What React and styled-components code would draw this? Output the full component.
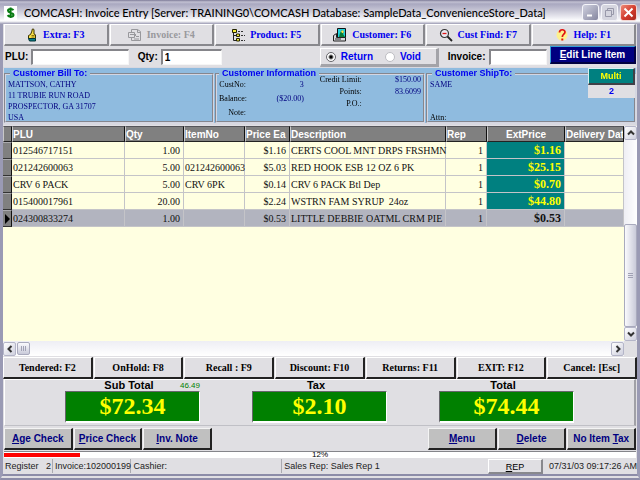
import React from "react";
import styled, { createGlobalStyle, css } from "styled-components";

const sans = '"Liberation Sans", Arial, sans-serif';
const serif = '"Liberation Serif", "Times New Roman", serif';
const face = "#e0dfe3";

const GlobalStyle = createGlobalStyle`
  * { box-sizing: border-box; }
  body { margin: 0; background: ${face}; font-family: ${sans}; }
  button, input { font: inherit; margin: 0; }
  button { padding: 0; }
`;

const Window = styled.div`
  min-height: 100vh;
  display: flex;
  flex-direction: column;
  background: ${face};
  border: solid #9a9ab4;
  border-width: 0 3px;
  border-bottom: 6px double #8c8ca8;
`;

/* Title bar */
const TitleBar = styled.header`
  height: 24px;
  margin: 0 -3px;
  padding: 1px 3px 0 4px;
  display: flex;
  align-items: center;
  gap: 7px;
  background: linear-gradient(#7d7b98 0, #c2c1d2 2px, #a9a8c0 4px, #c5c4d4 10px, #f4f4f8 19px, #ffffff 21px, #9a99b2 24px);
`;
const Title = styled.h1`
  flex: 1;
  margin: 0;
  font: 500 11px/16px Lato, ${sans};
  color: #000;
  white-space: nowrap;
`;
const WindowButtons = styled.div`
  display: flex;
  gap: 2px;
`;
const WindowButton = styled.button`
  width: 17px;
  height: 17px;
  display: grid;
  place-items: center;
  border: 1px solid ${(p) => (p.$close ? "#f4d8d4" : "#f5f5fa")};
  border-radius: 3px;
  background: ${(p) =>
    p.$close
      ? "linear-gradient(135deg, #ee8a78, #d23a2c 55%, #a82820)"
      : p.$muted
      ? "#d5d5df"
      : "linear-gradient(135deg, #d0d1df, #85869f)"};
`;

/* Toolbar */
const Toolbar = styled.nav`
  display: grid;
  grid-template-columns: repeat(6, 1fr);
  gap: 1px;
  padding: 0 1px;
`;
const ToolButton = styled.button`
  height: 22px;
  display: flex;
  align-items: center;
  justify-content: center;
  gap: 5px;
  background: ${face};
  border: solid;
  border-width: 1px 2px 2px 1px;
  border-color: #fff #88888d #88888d #fff;
  font: bold 10px/14px ${serif};
  color: #0000ee;
  &:disabled { color: #99999d; }
`;

/* Entry row */
const EntryRow = styled.form`
  height: 21px;
  display: grid;
  grid-template-columns: minmax(0, 1fr) minmax(0, 1fr);
`;
const EntryGroup = styled.div`
  display: flex;
  align-items: center;
  padding-left: ${(p) => (p.$right ? 0 : "2px")};
  padding-right: ${(p) => (p.$right ? "1px" : "98px")};
  gap: 3px;
`;
const FieldLabel = styled.label`
  font: bold 10px/16px ${sans};
  white-space: nowrap;
  margin-left: ${(p) => (p.$spaced ? "6px" : 0)};
`;
const TextBox = styled.input`
  flex: ${(p) => p.$grow} 1 0;
  min-width: 0;
  height: 16px;
  padding: 0 2px;
  border: solid;
  border-width: 2px 1px 1px 2px;
  border-color: #85858a #f6f6f6 #f6f6f6 #85858a;
  background: #fff;
  font: bold 10px/13px ${sans};
  border-radius: 0;
  outline: none;
`;
const RadioPanel = styled.div`
  flex: 116 1 0;
  height: 19px;
  display: flex;
  align-items: center;
  justify-content: center;
  gap: 12px;
  margin-top: 1px;
  padding: 2px 10px 0 0;
  border: solid;
  border-width: 1px 3px 3px 1px;
  border-color: #fff #a3a3a8 #a3a3a8 #fff;
`;
const RadioLabel = styled.label`
  display: flex;
  align-items: center;
  gap: 5px;
  font: bold 10px/12px ${sans};
  color: #0000f0;
`;
const Radio = styled.input`
  appearance: none;
  width: 10px;
  height: 10px;
  border-radius: 50%;
  border: 1px solid #77777c;
  border-color: ${(p) => (p.defaultChecked ? "#66666b" : "#bdbdc2")};
  background: #fff;
  &:checked { background: radial-gradient(circle, #000 0 1px, #fff 3px); }
`;
const EditButton = styled.button`
  flex: 92 1 0;
  height: 18px;
  align-self: flex-start;
  border: solid;
  border-width: 1px 2px 2px 1px;
  border-color: #35a0d8 #000040 #000040 #35a0d8;
  background: #000080;
  color: #fff;
  font: bold 10px/14px ${sans};
  white-space: nowrap;
`;

/* Customer strip */
const CustomerStrip = styled.section`
  display: grid;
  grid-template-columns: repeat(3, minmax(0, 1fr));
  gap: 1px;
  background: #8fbbdf;
  border: solid #d8d8e0;
  border-width: 1px 1px 2px;
`;
const Group = styled.fieldset`
  position: relative;
  min-width: 0;
  height: 55px;
  margin: 0;
  padding: 0 2px;
  border: 2px groove #d4d6e2;
`;
const Legend = styled.legend`
  margin-left: ${(p) => (p.$near ? 0 : "2px")};
  padding: 0 3px;
  font: bold 9px/11px ${sans};
  color: #0000f0;
  white-space: nowrap;
`;
const Address = styled.address`
  font: normal 8px/11px ${serif};
  color: #000080;
`;
const InfoColumns = styled.div`
  display: grid;
  grid-template-columns: 42fr 58fr;
`;
const InfoList = styled.dl`
  margin: ${(p) => (p.$wide ? "-5px 0 0" : 0)};
  display: grid;
  grid-template-columns: ${(p) => (p.$wide ? "58px 1fr" : "27px 1fr")};
  grid-auto-rows: ${(p) => (p.$wide ? "12px" : "14px")};
  font: 8px/12px ${serif};
  white-space: nowrap;
  text-align: right;
`;
const Term = styled.dt`
  color: #000;
`;
const Detail = styled.dd`
  margin: 0;
  color: #000080;
`;
const Attn = styled.div`
  margin-top: 22px;
  font: 8px/11px ${serif};
  color: #000;
`;
const MultiBox = styled.div`
  position: absolute;
  top: -11px;
  right: -1px;
  width: 47px;
  background: ${face};
  text-align: center;
  font: bold 9px/13px ${sans};
  color: #0000f0;
`;
const MultiButton = styled.button`
  display: block;
  width: 100%;
  height: 17px;
  border: solid;
  border-width: 1px 2px 2px 1px;
  border-color: #d8f0f0 #404048 #404048 #d8f0f0;
  background: #008080;
  color: #ffff00;
  font: bold 9px/12px ${sans};
`;

/* Item grid */
const GridArea = styled.section`
  flex: 1;
  display: grid;
  grid-template-columns: minmax(0, 1fr) 13px;
  grid-template-rows: 1fr 15px;
  margin-top: 1px;
  background: ${face};
`;
const GridView = styled.div`
  overflow: hidden;
  background: #ffffe1;
`;
const Table = styled.table`
  width: 100%;
  table-layout: fixed;
  border-collapse: separate;
  border-spacing: 0;
`;
const Col = styled.col`
  width: ${(p) => p.$w};
`;
const Th = styled.th`
  height: 16px;
  padding: 0;
  overflow: hidden;
  background: #808080;
  color: #fff;
  border-right: 1px solid #111;
  border-bottom: 1px solid #222;
  border-left: 1px solid #c8c8c8;
  border-top: 1px solid #55555a;
  font: bold 10px/13px ${sans};
  text-align: ${(p) => (p.$center ? "center" : "left")};
  white-space: nowrap;
`;
const Row = styled.tr`
  background: ${(p) => (p.$selected ? "#b2b4bf" : "#ffffe1")};
`;
const Td = styled.td`
  height: 17px;
  padding: ${(p) => (p.$right ? "0 3px 0 0" : "0 0 0 1px")};
  border-right: 1px solid #c4c4c8;
  border-bottom: 1px solid #c4c4c8;
  font: 10px/15px ${serif};
  color: #111;
  text-align: ${(p) => (p.$right ? "right" : "left")};
  white-space: pre;
  ${(p) =>
    p.$price &&
    css`
      font: bold 12px/15px ${serif};
      color: ${p.$selected ? "#111" : "#ffff00"};
      background: ${p.$selected ? "transparent" : "#008080"};
    `}
`;
const Marker = styled.td`
  padding: 0;
  background: #808080;
  border: solid;
  border-width: 1px 1px 1px 0;
  border-color: #aaaaae #111 #333 #aaaaae;
  line-height: 0;
`;

const VScroll = styled.div`
  display: flex;
  flex-direction: column;
  background: linear-gradient(90deg, #eeeef4, #fff);
`;
const HScroll = styled.div`
  display: flex;
  align-items: center;
  gap: 1px;
  background: linear-gradient(#eeeef4, #fff);
`;
const ScrollButton = styled.button`
  width: 13px;
  height: 14px;
  flex: none;
  display: grid;
  place-items: center;
  border: 1px solid #b4b5c8;
  border-radius: 2px;
  background: linear-gradient(135deg, #fff, #cfd0de);
`;
const VTrack = styled.div`
  flex: 85 1 0;
`;
const VThumb = styled.div`
  flex: 102 1 0;
  display: grid;
  place-items: center;
  border: 1px solid #a9aabd;
  border-radius: 2px;
  background: linear-gradient(90deg, #fafafd, #c9cad9);
`;
const HThumb = styled.div`
  width: 13px;
  height: 13px;
  display: grid;
  place-items: center;
  border: 1px solid #a9aabd;
  border-radius: 2px;
  background: linear-gradient(#fafafd, #c9cad9);
`;
const HTrack = styled.div`
  flex: 1;
`;

/* Action bar */
const ActionBar = styled.nav`
  display: grid;
  grid-template-columns: repeat(7, 1fr);
  gap: 1px;
  margin-top: 1px;
`;
const ActionButton = styled.button`
  height: 22px;
  border: solid;
  border-width: 1px 2px 2px 1px;
  border-color: #fff #222 #222 #fff;
  background: ${face};
  font: bold 10px/14px ${serif};
  color: #000;
`;

/* Totals */
const Totals = styled.section`
  display: grid;
  grid-template-columns: repeat(3, 1fr);
  height: 47px;
  margin: 0 1px;
  padding: 0 34px 2px;
  border: solid;
  border-width: 1px 2px 1px 1px;
  border-color: #fff #a0a0a6 #c0c0c6 #fff;
`;
const Total = styled.div`
  display: grid;
  grid-template-rows: 11px 32px;
  grid-template-columns: 1fr;
  padding: 0 26px;
`;
const TotalLabel = styled.div`
  position: relative;
  padding-right: 7px;
  font: bold 11px/11px ${sans};
  text-align: center;
`;
const Note = styled.span`
  position: absolute;
  right: 0;
  top: 0;
  font: 8px/11px ${sans};
  color: #008000;
`;
const TotalValue = styled.output`
  display: block;
  border: solid;
  border-width: 1px 1px 2px 1px;
  border-color: #66666b #fff #fff #66666b;
  background: #008000;
  color: #ffff00;
  font: bold 24px/29px ${serif};
  text-align: center;
`;

/* Bottom commands */
const Commands = styled.nav`
  display: flex;
  gap: 1px;
  padding: 2px 1px 1px;
`;
const CommandSpacer = styled.div`
  flex: 222 1 0;
`;
const CommandButton = styled.button`
  flex: 68 1 0;
  height: 22px;
  border: solid;
  border-width: 1px 2px 2px 1px;
  border-color: #f4f4f4 #222 #222 #f4f4f4;
  background: #c0c0c0;
  color: #000080;
  font: bold 10px/14px ${sans};
  white-space: nowrap;
`;
const Progress = styled.div`
  height: 7px;
  margin: 0 1px;
  border-top: 1px solid #85858a;
  background: #fff;
  display: grid;
  grid-template: 6px / 1fr;
`;
const ProgressBar = styled.div`
  grid-area: 1 / 1;
  height: 4px;
  margin-top: 1px;
  background: #ff0000;
`;
const ProgressText = styled.span`
  grid-area: 1 / 1;
  text-align: center;
  font: 8px/6px ${sans};
`;
const StatusBar = styled.footer`
  height: 16px;
  display: flex;
  align-items: center;
  font: 9px/14px ${sans};
  color: #222;
  white-space: nowrap;
`;
const StatusCell = styled.div`
  flex: ${(p) => p.$grow} 1 0;
  min-width: 0;
  height: 14px;
  padding-left: 2px;
  border-right: ${(p) => (p.$last ? 0 : "1px solid #aaaab0")};
  white-space: pre;
  text-align: ${(p) => (p.$end ? "right" : "left")};
`;
const RepButton = styled.button`
  flex: 53 1 0;
  height: 15px;
  border: solid;
  border-width: 1px 2px 2px 1px;
  border-color: #fff #88888d #88888d #fff;
  background: ${face};
`;

const svgProps = { "aria-hidden": true, fill: "none" };

function DollarIcon() {
  return (
    <svg {...svgProps} width="13" height="14" viewBox="0 0 13 14">
      <path fill="#fff" d="M0 0h13v14H0z" />
      <path d="M9.4 4.200C8.500 2.600 4 2.600 4 4.700c0 2.300 5.500 1.700 5.500 4.200 0 2-4.600 2.200-5.900.2M6.600 1.500v10.500" stroke="#087a12" strokeWidth="2" />
    </svg>
  );
}
function HandIcon() {
  return (
    <svg {...svgProps} width="11" height="14" viewBox="0 0 11 14">
      <path d="M3.500 6.500 5 3V1.500q1-1.200 2 0V6l1.500.8v3.700H1.500V7.500z" fill="#f7dd45" stroke="#3a3200" />
      <path d="M4.500 7.500h3M4.500 9h3" stroke="#705c00" strokeWidth=".8" />
      <path d="M1.500 10.500h7v2.500h-6z" fill="#087f8c" stroke="#033" />
    </svg>
  );
}
function InvoiceIcon() {
  return (
    <svg {...svgProps} width="14" height="14" viewBox="0 0 14 14" stroke="#98989c">
      <path d="M3.500 4V1.500h6l3 2v9h-9V10" />
      <path d="M9.500 1.500v3h3M.5 4.500h6v5h-6zM2 6.500h5M5 4l3 3-3 3M8 8.500h3M6 11h5" />
    </svg>
  );
}
function TreeIcon() {
  return (
    <svg {...svgProps} width="13" height="14" viewBox="0 0 13 14">
      <path d="M1.500 1v11.500M1.500 7.500h3M1.500 12.500h3" stroke="#222" />
      <path d="M.5 1.500h4v3h-4z" fill="#f5ea35" stroke="#222200" />
      <path d="M4.500 6h3v2.500h-3zM4.500 10.500h3V13h-3z" fill="#f5ea35" stroke="#222200" />
      <path d="M6 3.500h5M9 7.500h4M9 12.500h4" stroke="#333" strokeDasharray="2 1" />
    </svg>
  );
}
function CustomerIcon() {
  return (
    <svg {...svgProps} width="14" height="14" viewBox="0 0 14 14">
      <path d="M4.500.5h8v9h-8z" fill="#20d2dc" stroke="#111" />
      <path d="M6 9l1-4 2-3 2 2-1 2 2 3z" fill="#087a35" />
      <path d="M8 3l2-.8 1 2-2 1z" fill="#ffe34e" />
      <path d="M.5 7.500l3-2v4h9v3.500H.5z" fill="#d8d8dc" stroke="#222" />
      <path d="M2 11h6" stroke="#333" />
    </svg>
  );
}
function FindIcon() {
  return (
    <svg {...svgProps} width="14" height="14" viewBox="0 0 14 14">
      <circle cx="5.500" cy="5.500" r="4" fill="#e8e8f0" stroke="#333" strokeWidth="1.200" />
      <path d="M3.500 5.500h4" stroke="#e01818" strokeWidth="1.300" />
      <path d="M8.500 8.500l4.500 4.500" stroke="#222" strokeWidth="1.800" />
    </svg>
  );
}
function HelpIcon() {
  return (
    <svg {...svgProps} width="13" height="14" viewBox="0 0 13 14">
      <circle cx="6" cy="7" r="5.500" fill="#fdf08c" />
      <path d="M3.500 4.500c0-3.600 5.500-3.600 5.500-.4C9 6.300 6.300 6.200 6.300 9" stroke="#e01212" strokeWidth="1.700" />
      <path d="M5.300 10.500h2v2h-2z" fill="#e01212" />
    </svg>
  );
}
const chevrons = {
  up: "M1 5.500l3-3 3 3",
  down: "M1 2.500l3 3 3-3",
  left: "M5.500 1l-3 3 3 3",
  right: "M2.500 1l3 3-3 3",
};
function Chevron({ dir }) {
  return (
    <svg {...svgProps} width="8" height="8" viewBox="0 0 8 8">
      <path d={chevrons[dir]} stroke="#333" strokeWidth="2" />
    </svg>
  );
}
function Grip({ vertical }) {
  return (
    <svg {...svgProps} width="7" height="7" viewBox="0 0 7 7">
      <path d={vertical ? "M1.500 1v5M3.500 1v5M5.500 1v5" : "M1 1.500h5M1 3.500h5M1 5.500h5"} stroke="#a0a1b4" />
    </svg>
  );
}

const tools = [
  { label: "Extra: F3", Icon: HandIcon },
  { label: "Invoice: F4", Icon: InvoiceIcon, disabled: true },
  { label: "Product: F5", Icon: TreeIcon },
  { label: "Customer: F6", Icon: CustomerIcon },
  { label: "Cust Find: F7", Icon: FindIcon },
  { label: "Help: F1", Icon: HelpIcon },
];

const items = [
  ["012546717151", "1.00", "", "$1.16", "CERTS COOL MNT DRPS FRSHMN", "1", "$1.16"],
  ["021242600063", "5.00", "021242600063", "$5.03", "RED HOOK ESB 12 OZ 6 PK", "1", "$25.15"],
  ["CRV 6 PACK", "5.00", "CRV 6PK", "$0.14", "CRV 6 PACK Btl Dep", "1", "$0.70"],
  ["015400017961", "20.00", "", "$2.24", "WSTRN FAM SYRUP  24oz", "1", "$44.80"],
  ["024300833274", "1.00", "", "$0.53", "LITTLE DEBBIE OATML CRM PIE", "1", "$0.53"],
];
const selectedRow = 4;

const actions = ["Tendered: F2", "OnHold: F8", "Recall : F9", "Discount: F10", "Returns: F11", "EXIT: F12", "Cancel: [Esc]"];

const totals = [
  { label: "Sub Total", value: "$72.34", note: "46.49" },
  { label: "Tax", value: "$2.10" },
  { label: "Total", value: "$74.44" },
];

export default function App() {
  return (
    <>
      <GlobalStyle />
      <Window>
        <TitleBar>
          <DollarIcon />
          <Title>COMCASH: Invoice Entry [Server: TRAINING0\COMCASH Database: SampleData_ConvenienceStore_Data]</Title>
          <WindowButtons>
            <WindowButton aria-label="Minimize">
              <svg {...svgProps} width="11" height="11" viewBox="0 0 11 11">
                <path d="M2 8.500h5" stroke="#fff" strokeWidth="2" />
              </svg>
            </WindowButton>
            <WindowButton aria-label="Restore" $muted>
              <svg {...svgProps} width="11" height="11" viewBox="0 0 11 11" stroke="#9898aa">
                <path d="M3.500 3.500v-2h6v6h-2M1.500 3.500h6v6h-6z" />
              </svg>
            </WindowButton>
            <WindowButton aria-label="Close" $close>
              <svg {...svgProps} width="11" height="11" viewBox="0 0 11 11">
                <path d="M1.500 1.500l8 8M9.500 1.500l-8 8" stroke="#fff" strokeWidth="2" />
              </svg>
            </WindowButton>
          </WindowButtons>
        </TitleBar>

        <Toolbar>
          {tools.map(({ label, Icon, disabled }) => (
            <ToolButton key={label} disabled={disabled}>
              <Icon />
              {label}
            </ToolButton>
          ))}
        </Toolbar>

        <EntryRow onSubmit={(e) => e.preventDefault()}>
          <EntryGroup>
            <FieldLabel htmlFor="plu">PLU:</FieldLabel>
            <TextBox id="plu" $grow={105} autoFocus />
            <FieldLabel htmlFor="qty" $spaced>Qty:</FieldLabel>
            <TextBox id="qty" $grow={63} defaultValue="1" />
          </EntryGroup>
          <EntryGroup $right>
            <RadioPanel>
              <RadioLabel>
                <Radio type="radio" name="mode" defaultChecked />
                Return
              </RadioLabel>
              <RadioLabel>
                <Radio type="radio" name="mode" />
                Void
              </RadioLabel>
            </RadioPanel>
            <FieldLabel htmlFor="invoice" $spaced>Invoice:</FieldLabel>
            <TextBox id="invoice" $grow={57} />
            <EditButton type="button">
              <u>E</u>dit Line Item
            </EditButton>
          </EntryGroup>
        </EntryRow>

        <CustomerStrip>
          <Group>
            <Legend>Customer Bill To:</Legend>
            <Address>
              MATTSON, CATHY
              <br />
              11 TRUBIE RUN ROAD
              <br />
              PROSPECTOR, GA 31707
              <br />
              USA
            </Address>
          </Group>
          <Group>
            <Legend $near>Customer Information</Legend>
            <InfoColumns>
              <InfoList>
                <Term>CustNo:</Term>
                <Detail>3</Detail>
                <Term>Balance:</Term>
                <Detail>($20.00)</Detail>
                <Term>Note:</Term>
                <Detail />
              </InfoList>
              <InfoList $wide>
                <Term>Credit Limit:</Term>
                <Detail>$150.00</Detail>
                <Term>Points:</Term>
                <Detail>83.6099</Detail>
                <Term>P.O.:</Term>
                <Detail />
              </InfoList>
            </InfoColumns>
          </Group>
          <Group>
            <Legend>Customer ShipTo:</Legend>
            <Address>SAME</Address>
            <Attn>Attn:</Attn>
            <MultiBox>
              <MultiButton>Multi</MultiButton>2
            </MultiBox>
          </Group>
        </CustomerStrip>

        <GridArea>
          <GridView>
            <Table>
              <colgroup>
                <Col $w="9px" />
                <Col $w="113px" />
                <Col $w="59px" />
                <Col $w="61px" />
                <Col $w="45px" />
                <Col $w="156px" />
                <Col $w="41px" />
                <Col $w="78px" />
                <Col />
              </colgroup>
              <thead>
                <tr>
                  <Th aria-label="Current row" />
                  <Th>PLU</Th>
                  <Th>Qty</Th>
                  <Th>ItemNo</Th>
                  <Th>Price Ea</Th>
                  <Th>Description</Th>
                  <Th>Rep</Th>
                  <Th $center>ExtPrice</Th>
                  <Th>Delivery Dat</Th>
                </tr>
              </thead>
              <tbody>
                {items.map(([plu, qty, itemNo, price, desc, rep, ext], i) => {
                  const selected = i === selectedRow;
                  return (
                    <Row key={plu} $selected={selected}>
                      <Marker>
                        {selected && (
                          <svg {...svgProps} width="8" height="10" viewBox="0 0 8 10">
                            <path d="M2 0l5 5-5 5z" fill="#000" />
                          </svg>
                        )}
                      </Marker>
                      <Td>{plu}</Td>
                      <Td $right>{qty}</Td>
                      <Td>{itemNo}</Td>
                      <Td $right>{price}</Td>
                      <Td>{desc}</Td>
                      <Td $right>{rep}</Td>
                      <Td $right $price $selected={selected}>{ext}</Td>
                      <Td />
                    </Row>
                  );
                })}
              </tbody>
            </Table>
          </GridView>
          <VScroll>
            <ScrollButton aria-label="Scroll up"><Chevron dir="up" /></ScrollButton>
            <VTrack />
            <VThumb><Grip /></VThumb>
            <ScrollButton aria-label="Scroll down"><Chevron dir="down" /></ScrollButton>
          </VScroll>
          <HScroll>
            <ScrollButton aria-label="Scroll left"><Chevron dir="left" /></ScrollButton>
            <HThumb><Grip vertical /></HThumb>
            <HTrack />
            <ScrollButton aria-label="Scroll right"><Chevron dir="right" /></ScrollButton>
          </HScroll>
        </GridArea>

        <ActionBar>
          {actions.map((label) => (
            <ActionButton key={label}>{label}</ActionButton>
          ))}
        </ActionBar>

        <Totals>
          {totals.map(({ label, value, note }) => (
            <Total key={label}>
              <TotalLabel>
                {label}
                {note && <Note>{note}</Note>}
              </TotalLabel>
              <TotalValue>{value}</TotalValue>
            </Total>
          ))}
        </Totals>

        <Commands>
          <CommandButton><u>A</u>ge Check</CommandButton>
          <CommandButton><u>P</u>rice Check</CommandButton>
          <CommandButton><u>I</u>nv. Note</CommandButton>
          <CommandSpacer />
          <CommandButton><u>M</u>enu</CommandButton>
          <CommandButton><u>D</u>elete</CommandButton>
          <CommandButton>No Item <u>T</u>ax</CommandButton>
        </Commands>

        <Progress>
          <ProgressBar style={{ width: "12%" }} />
          <ProgressText>12%</ProgressText>
        </Progress>

        <StatusBar>
          <StatusCell $grow={48}>{"Register   2"}</StatusCell>
          <StatusCell $grow={77}>Invoice:102000199</StatusCell>
          <StatusCell $grow={151}>Cashier:</StatusCell>
          <StatusCell $grow={208} $last>Sales Rep: Sales Rep 1</StatusCell>
          <RepButton><u>R</u>EP</RepButton>
          <StatusCell $grow={94} $last $end>07/31/03 09:17:26 AM</StatusCell>
        </StatusBar>
      </Window>
    </>
  );
}
